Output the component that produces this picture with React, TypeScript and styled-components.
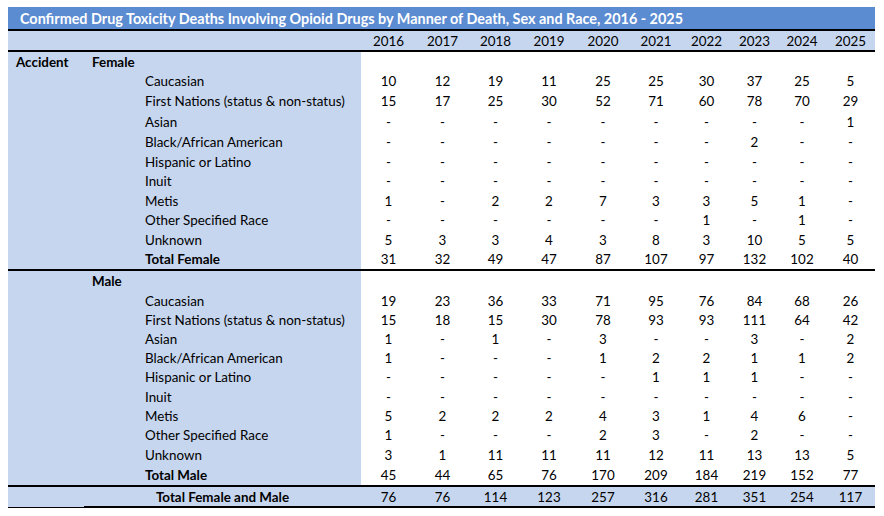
import styled, { createGlobalStyle } from 'styled-components';

const LIGHT = '#c6d6ee';
const DARK = '#5b8bd1';
const COLS = '76px 53px 224px 55px 53px 53px 54px 54px 52px 49px 47px 48px 49px';

const GlobalStyle = createGlobalStyle`
  body {
    margin: 0;
    background: #fff;
    color: #000;
    font-family: Lato, 'Liberation Sans', sans-serif;
  }
`;

const Sheet = styled.div`
  padding: 7px 0 0 8px;
  width: 867px;
  font-size: 13.4px;
`;

const TitleBar = styled.div`
  height: 22px;
  background: ${DARK};
  color: #fff;
  font-size: 14.4px;
  font-weight: 700;
  padding-left: 12px;
  display: flex;
  align-items: center;
  border-bottom: 2px solid #000;
`;

const Row = styled.div<{ $h: number; $rule?: boolean; $shade?: boolean }>`
  display: grid;
  grid-template-columns: ${COLS};
  height: ${p => p.$h}px;
  background: ${p => (p.$shade ? LIGHT : 'transparent')};
  border-bottom: ${p => (p.$rule ? '2px solid #000' : 'none')};
`;

const Label = styled.div<{ $bold?: boolean }>`
  background: ${LIGHT};
  padding-left: 8px;
  display: flex;
  align-items: center;
  white-space: nowrap;
  font-weight: ${p => (p.$bold ? 700 : 400)};
`;

const Num = styled.div`
  display: flex;
  align-items: center;
  justify-content: center;
`;

// the rule above this row is the Total Male row's bottom border
const TotalRow = styled.div`
  display: grid;
  grid-template-columns: ${COLS};
  height: 21px;
  background: ${LIGHT};
`;

const TotalEdge = styled.div`
  border-bottom: 1px solid #000;
`;

const TotalLabel = styled.div`
  grid-column: span 2;
  display: flex;
  align-items: center;
  justify-content: center;
  font-weight: 700;
  border-bottom: 2px solid #000;
`;

const TotalNum = styled(Num)`
  border-bottom: 2px solid #000;
`;

const years = [2016, 2017, 2018, 2019, 2020, 2021, 2022, 2023, 2024, 2025];

type Line = { race: string; values: string[]; total?: boolean };

const split = (s: string) => s.split(' ');

const female: Line[] = [
  { race: 'Caucasian', values: split('10 12 19 11 25 25 30 37 25 5') },
  { race: 'First Nations (status & non-status)', values: split('15 17 25 30 52 71 60 78 70 29') },
  { race: 'Asian', values: split('- - - - - - - - - 1') },
  { race: 'Black/African American', values: split('- - - - - - - 2 - -') },
  { race: 'Hispanic or Latino', values: split('- - - - - - - - - -') },
  { race: 'Inuit', values: split('- - - - - - - - - -') },
  { race: 'Metis', values: split('1 - 2 2 7 3 3 5 1 -') },
  { race: 'Other Specified Race', values: split('- - - - - - 1 - 1 -') },
  { race: 'Unknown', values: split('5 3 3 4 3 8 3 10 5 5') },
  { race: 'Total Female', values: split('31 32 49 47 87 107 97 132 102 40'), total: true },
];

const male: Line[] = [
  { race: 'Caucasian', values: split('19 23 36 33 71 95 76 84 68 26') },
  { race: 'First Nations (status & non-status)', values: split('15 18 15 30 78 93 93 111 64 42') },
  { race: 'Asian', values: split('1 - 1 - 3 - - 3 - 2') },
  { race: 'Black/African American', values: split('1 - - - 1 2 2 1 1 2') },
  { race: 'Hispanic or Latino', values: split('- - - - - 1 1 1 - -') },
  { race: 'Inuit', values: split('- - - - - - - - - -') },
  { race: 'Metis', values: split('5 2 2 2 4 3 1 4 6 -') },
  { race: 'Other Specified Race', values: split('1 - - - 2 3 - 2 - -') },
  { race: 'Unknown', values: split('3 1 11 11 11 12 11 13 13 5') },
  { race: 'Total Male', values: split('45 44 65 76 170 209 184 219 152 77'), total: true },
];

const grand = split('76 76 114 123 257 316 281 351 254 117');

// row heights as the sheet has them (first entry is the sex heading row)
const femaleHeights = [19, 20, 20, 21, 20, 19, 20, 19, 20, 19, 20];
const maleHeights = [20, 19, 19, 19, 19, 20, 19, 19, 20, 20, 20];

function Block({ manner, sex, lines, heights }: { manner: string; sex: string; lines: Line[]; heights: number[] }) {
  return (
    <>
      <Row $h={heights[0]}>
        <Label $bold>{manner}</Label>
        <Label $bold>{sex}</Label>
        <Label />
        {years.map(y => (
          <Num key={y} />
        ))}
      </Row>
      {lines.map((l, i) => (
        <Row key={l.race} $h={heights[i + 1]} $rule={l.total}>
          <Label />
          <Label />
          <Label $bold={l.total}>{l.race}</Label>
          {l.values.map((v, j) => (
            <Num key={j}>{v}</Num>
          ))}
        </Row>
      ))}
    </>
  );
}

export default function App() {
  return (
    <>
      <GlobalStyle />
      <Sheet>
        <TitleBar>
          Confirmed Drug Toxicity Deaths Involving Opioid Drugs by Manner of Death, Sex and Race, 2016 - 2025
        </TitleBar>
        <Row $h={19} $rule $shade>
          <Label />
          <Label />
          <Label />
          {years.map(y => (
            <Num key={y}>{y}</Num>
          ))}
        </Row>
        <Block manner="Accident" sex="Female" lines={female} heights={femaleHeights} />
        <Block manner="" sex="Male" lines={male} heights={maleHeights} />
        <TotalRow>
          <TotalEdge />
          <TotalLabel>Total Female and Male</TotalLabel>
          {grand.map((v, j) => (
            <TotalNum key={j}>{v}</TotalNum>
          ))}
        </TotalRow>
      </Sheet>
    </>
  );
}
